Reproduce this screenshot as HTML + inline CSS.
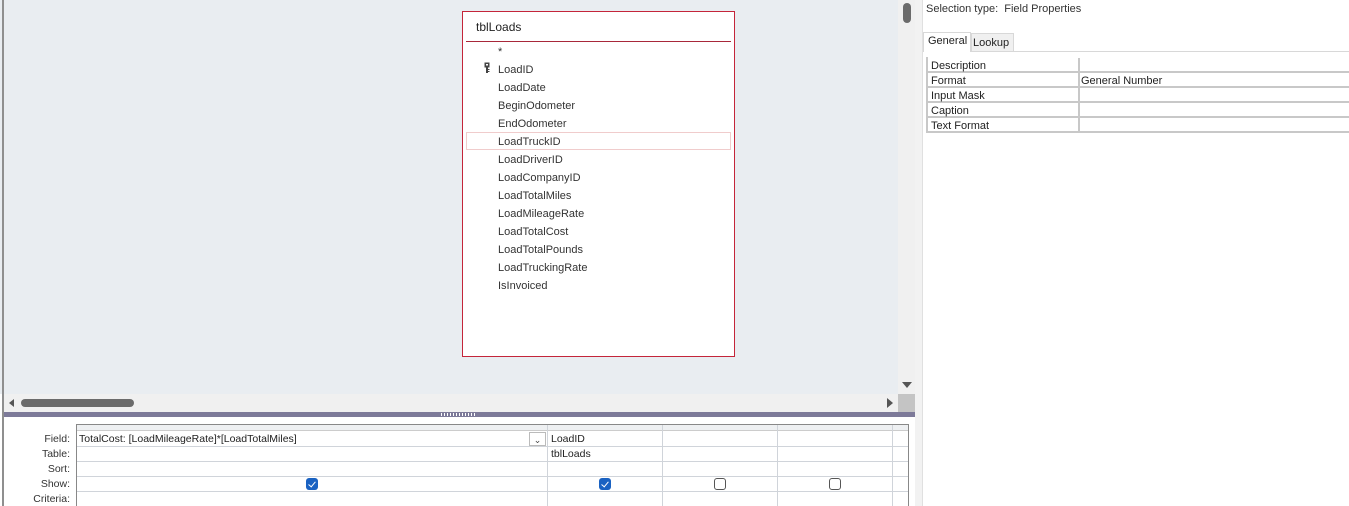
<!DOCTYPE html>
<html><head><style>
*{margin:0;padding:0;box-sizing:border-box}
body{width:1349px;height:506px;overflow:hidden;background:#fff;font-family:"Liberation Sans",sans-serif;font-size:11px;color:#222;position:relative}
.a{position:absolute}
.fl{position:absolute;left:498px;font-size:11px;color:#333}
.lbl{position:absolute;right:1279px;font-size:10.5px;color:#333;text-align:right}
.cb{position:absolute;width:12px;height:12px;border-radius:3px}
.cb.on{background:#1a62c2}
.cb.on:after{content:"";position:absolute;left:4px;top:2px;width:3px;height:6px;border:solid #fff;border-width:0 1px 1px 0;transform:rotate(40deg)}
.cb.off{border:1px solid #555;background:#fff}
.pr{position:absolute;left:926px;width:423px;height:15px;border-bottom:2px solid #c8c8c8}
.pr span{position:absolute;left:5px;top:2px}
.pr i{position:absolute;left:152px;top:0;width:2px;height:15px;background:#c8c8c8}
</style></head><body>
<div class="a" style="left:0;top:0;width:898px;height:394px;background:#e9edf1"></div>
<div class="a" style="left:2px;top:0;width:2px;height:506px;background:#8f8f8f"></div>
<div class="a" style="left:898px;top:0;width:17px;height:394px;background:#f0f0f0"></div>
<div class="a" style="left:903px;top:3px;width:8px;height:20px;border-radius:4px;background:#6b6b6b"></div>
<div class="a" style="left:902px;top:382px;width:0;height:0;border-left:5px solid transparent;border-right:5px solid transparent;border-top:6px solid #555"></div>
<div class="a" style="left:915px;top:0;width:8px;height:506px;background:#f2f2f2"></div>
<div class="a" style="left:922px;top:0;width:1px;height:506px;background:#e0e0e0"></div>
<div class="a" style="left:4px;top:394px;width:894px;height:18px;background:#f0f0f0"></div>
<div class="a" style="left:898px;top:394px;width:17px;height:18px;background:#c4c4c4"></div>
<div class="a" style="left:9px;top:399px;width:0;height:0;border-top:4px solid transparent;border-bottom:4px solid transparent;border-right:5px solid #555"></div>
<div class="a" style="left:21px;top:399px;width:113px;height:8px;border-radius:4px;background:#6b6b6b"></div>
<div class="a" style="left:887px;top:398px;width:0;height:0;border-top:5px solid transparent;border-bottom:5px solid transparent;border-left:6px solid #555"></div>
<div class="a" style="left:4px;top:412px;width:911px;height:5px;background:#7d7a99"></div>
<div class="a" style="left:441px;top:413px;width:36px;height:3px;background:repeating-linear-gradient(90deg,#fff 0 1px,#7d7a99 1px 3px)"></div>
<div class="a" style="left:462px;top:11px;width:273px;height:346px;border:1px solid #c4253a;background:#fff"></div>
<div class="a" style="left:476px;top:20px;font-size:12px;color:#222">tblLoads</div>
<div class="a" style="left:466px;top:41px;width:265px;height:1px;background:#a8283a"></div>
<div class="a" style="left:466px;top:132px;width:265px;height:18px;border:1px solid #f0cccc"></div>
<div class="fl" style="top:46px">*</div>
<svg class="a" style="left:484px;top:62px" width="6" height="12" viewBox="0 0 6 12"><rect x="0.5" y="0.5" width="5" height="5" fill="#444"/><rect x="2" y="5" width="2" height="6" fill="#444"/><rect x="4" y="7" width="1.5" height="1" fill="#444"/><rect x="4" y="9" width="1.5" height="1" fill="#444"/><rect x="2" y="2" width="2" height="1.5" fill="#fff"/></svg>
<div class="fl" style="top:64px">LoadID</div>
<div class="fl" style="top:82px">LoadDate</div>
<div class="fl" style="top:100px">BeginOdometer</div>
<div class="fl" style="top:118px">EndOdometer</div>
<div class="fl" style="top:136px">LoadTruckID</div>
<div class="fl" style="top:154px">LoadDriverID</div>
<div class="fl" style="top:172px">LoadCompanyID</div>
<div class="fl" style="top:190px">LoadTotalMiles</div>
<div class="fl" style="top:208px">LoadMileageRate</div>
<div class="fl" style="top:226px">LoadTotalCost</div>
<div class="fl" style="top:244px">LoadTotalPounds</div>
<div class="fl" style="top:262px">LoadTruckingRate</div>
<div class="fl" style="top:280px">IsInvoiced</div>
<div class="a" style="left:76px;top:424px;width:833px;height:82px;border:1px solid #888;border-bottom:none;background:#fff"></div>
<div class="a" style="left:77px;top:425px;width:831px;height:6px;background:#eef0f2;border-bottom:1px solid #ccc"></div>
<div class="a" style="left:77px;top:446px;width:831px;height:1px;background:#d0d4da"></div>
<div class="a" style="left:77px;top:461px;width:831px;height:1px;background:#d0d4da"></div>
<div class="a" style="left:77px;top:476px;width:831px;height:1px;background:#d0d4da"></div>
<div class="a" style="left:77px;top:491px;width:831px;height:1px;background:#d0d4da"></div>
<div class="a" style="left:547px;top:425px;width:1px;height:81px;background:#d0d4da"></div>
<div class="a" style="left:662px;top:425px;width:1px;height:81px;background:#d0d4da"></div>
<div class="a" style="left:777px;top:425px;width:1px;height:81px;background:#d0d4da"></div>
<div class="a" style="left:892px;top:425px;width:1px;height:81px;background:#d0d4da"></div>
<div class="lbl" style="top:433px">Field:</div>
<div class="lbl" style="top:448px">Table:</div>
<div class="lbl" style="top:463px">Sort:</div>
<div class="lbl" style="top:478px">Show:</div>
<div class="lbl" style="top:493px">Criteria:</div>
<div class="a" style="left:79px;top:433px;font-size:10.5px">TotalCost: [LoadMileageRate]*[LoadTotalMiles]</div>
<div class="a" style="left:529px;top:432px;width:17px;height:14px;border:1px solid #bbb;font-size:9px;text-align:center;line-height:14px;color:#444">&#8964;</div>
<div class="a" style="left:551px;top:433px;font-size:10.5px">LoadID</div>
<div class="a" style="left:551px;top:448px;font-size:10.5px">tblLoads</div>
<div class="cb on" style="left:306px;top:478px"></div>
<div class="cb on" style="left:599px;top:478px"></div>
<div class="cb off" style="left:714px;top:478px"></div>
<div class="cb off" style="left:829px;top:478px"></div>
<div class="a" style="left:926px;top:3px;font-size:11px;color:#333">Selection type:&nbsp; Field Properties</div>
<div class="a" style="left:923px;top:51px;width:426px;height:1px;background:#d8d8d8"></div>
<div class="a" style="left:923px;top:32px;width:48px;height:20px;background:#fff;border:1px solid #d8d8d8;border-bottom:none"></div>
<div class="a" style="left:928px;top:35px;font-size:11px">General</div>
<div class="a" style="left:971px;top:33px;width:43px;height:18px;background:#f0f0f0;border:1px solid #d8d8d8;border-bottom:none"></div>
<div class="a" style="left:973px;top:37px;font-size:11px">Lookup</div>
<div class="a" style="left:926px;top:57px;width:2px;height:76px;background:#c8c8c8"></div>
<div class="pr" style="top:58px"><span>Description</span><i></i></div>
<div class="pr" style="top:73px"><span>Format</span><i></i><span style="left:155px">General Number</span></div>
<div class="pr" style="top:88px"><span>Input Mask</span><i></i></div>
<div class="pr" style="top:103px"><span>Caption</span><i></i></div>
<div class="pr" style="top:118px"><span>Text Format</span><i></i></div>
</body></html>
